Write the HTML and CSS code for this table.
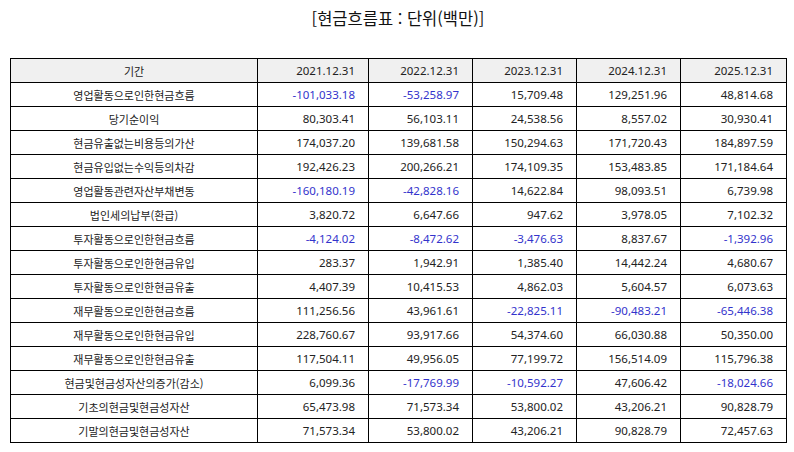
FILE: index.html
```html
<!DOCTYPE html>
<html lang="ko">
<head>
<meta charset="utf-8">
<link rel="stylesheet" href="styles.css">
</head>
<body>
<div class="page">
  <h1 class="title">[현금흐름표 : 단위(백만)]</h1>
  <table class="cf">
    <colgroup>
      <col class="c0"><col class="c1"><col class="c2"><col class="c3"><col class="c4"><col class="c5">
    </colgroup>
    <thead>
      <tr><th class="lab">기간</th><th>2021.12.31</th><th>2022.12.31</th><th>2023.12.31</th><th>2024.12.31</th><th>2025.12.31</th></tr>
    </thead>
    <tbody>
      <tr><td class="lab">영업활동으로인한현금흐름</td><td class="neg">-101,033.18</td><td class="neg">-53,258.97</td><td>15,709.48</td><td>129,251.96</td><td>48,814.68</td></tr>
      <tr><td class="lab">당기순이익</td><td>80,303.41</td><td>56,103.11</td><td>24,538.56</td><td>8,557.02</td><td>30,930.41</td></tr>
      <tr><td class="lab">현금유출없는비용등의가산</td><td>174,037.20</td><td>139,681.58</td><td>150,294.63</td><td>171,720.43</td><td>184,897.59</td></tr>
      <tr><td class="lab">현금유입없는수익등의차감</td><td>192,426.23</td><td>200,266.21</td><td>174,109.35</td><td>153,483.85</td><td>171,184.64</td></tr>
      <tr><td class="lab">영업활동관련자산부채변동</td><td class="neg">-160,180.19</td><td class="neg">-42,828.16</td><td>14,622.84</td><td>98,093.51</td><td>6,739.98</td></tr>
      <tr><td class="lab">법인세의납부(환급)</td><td>3,820.72</td><td>6,647.66</td><td>947.62</td><td>3,978.05</td><td>7,102.32</td></tr>
      <tr><td class="lab">투자활동으로인한현금흐름</td><td class="neg">-4,124.02</td><td class="neg">-8,472.62</td><td class="neg">-3,476.63</td><td>8,837.67</td><td class="neg">-1,392.96</td></tr>
      <tr><td class="lab">투자활동으로인한현금유입</td><td>283.37</td><td>1,942.91</td><td>1,385.40</td><td>14,442.24</td><td>4,680.67</td></tr>
      <tr><td class="lab">투자활동으로인한현금유출</td><td>4,407.39</td><td>10,415.53</td><td>4,862.03</td><td>5,604.57</td><td>6,073.63</td></tr>
      <tr><td class="lab">재무활동으로인한현금흐름</td><td>111,256.56</td><td>43,961.61</td><td class="neg">-22,825.11</td><td class="neg">-90,483.21</td><td class="neg">-65,446.38</td></tr>
      <tr><td class="lab">재무활동으로인한현금유입</td><td>228,760.67</td><td>93,917.66</td><td>54,374.60</td><td>66,030.88</td><td>50,350.00</td></tr>
      <tr><td class="lab">재무활동으로인한현금유출</td><td>117,504.11</td><td>49,956.05</td><td>77,199.72</td><td>156,514.09</td><td>115,796.38</td></tr>
      <tr><td class="lab">현금및현금성자산의증가(감소)</td><td>6,099.36</td><td class="neg">-17,769.99</td><td class="neg">-10,592.27</td><td>47,606.42</td><td class="neg">-18,024.66</td></tr>
      <tr><td class="lab">기초의현금및현금성자산</td><td>65,473.98</td><td>71,573.34</td><td>53,800.02</td><td>43,206.21</td><td>90,828.79</td></tr>
      <tr><td class="lab">기말의현금및현금성자산</td><td>71,573.34</td><td>53,800.02</td><td>43,206.21</td><td>90,828.79</td><td>72,457.63</td></tr>
    </tbody>
  </table>
</div>
</body>
</html>
```

FILE: styles.css
```css
html, body {
  margin: 0;
  padding: 0;
  background: #ffffff;
}
body {
  font-family: "Noto Sans", "Noto Sans CJK KR", sans-serif;
  color: #111111;
}
.page {
  padding: 6px 8px 0 10px;
}
.title {
  margin: 0;
  height: 52px;
  font-family: "Noto Sans CJK KR", sans-serif;
  font-size: 16.5px;
  font-weight: normal;
  text-align: center;
  line-height: 24px;
  color: #111111;
}
.cf {
  border-collapse: collapse;
  table-layout: fixed;
  width: 777px;
  font-size: 11.5px;
}
.c0 { width: 247px; }
.c1 { width: 111px; }
.c2 { width: 104px; }
.c3 { width: 104px; }
.c4 { width: 104px; }
.c5 { width: 106px; }
.cf th, .cf td {
  border: 1px solid #000000;
  height: 24px;
  padding: 0 13px 0 4px;
  text-align: right;
  font-weight: normal;
  line-height: 14px;
  white-space: nowrap;
  box-sizing: border-box;
  color: #222222;
}
.cf th {
  background: #f0f0f0;
}
.cf .lab {
  text-align: center;
  padding: 0 4px;
  font-family: "Noto Sans CJK KR", sans-serif;
  font-size: 11px;
}
.cf .neg {
  color: #3333cc;
}
```
